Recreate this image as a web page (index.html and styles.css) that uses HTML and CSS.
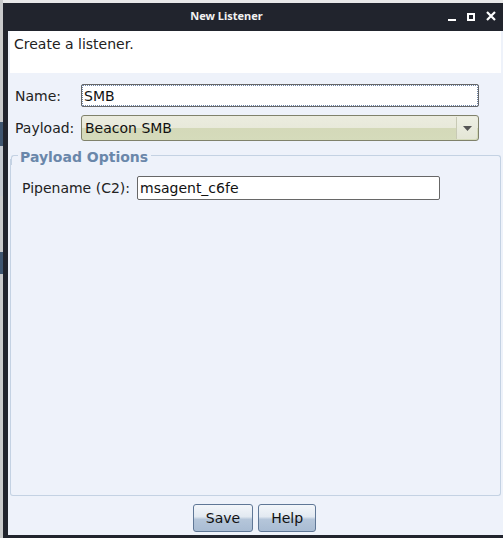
FILE: index.html
```html
<!DOCTYPE html>
<html>
<head>
<meta charset="utf-8">
<link rel="stylesheet" href="styles.css">
</head>
<body>
<div class="desk">
  <div class="behind">
    <div class="chunk c1"></div>
    <div class="chunk c2"></div>
    <div class="chunk c3"></div>
    <div class="chunk c4"></div>
  </div>
  <div class="window">
    <div class="titlebar">
      <span class="title">New Listener</span>
      <div class="controls">
        <span class="min"></span>
        <span class="max"></span>
        <svg class="close" width="10" height="10" viewBox="0 0 10 10"><path d="M1 1L9 9M9 1L1 9" stroke="#fff" stroke-width="2.2"/></svg>
      </div>
    </div>
    <div class="client">
      <div class="header">Create a listener.</div>
      <div class="form">
        <div class="row">
          <label class="lbl">Name:</label>
          <div class="input focused"><span>SMB</span></div>
        </div>
        <div class="row">
          <label class="lbl">Payload:</label>
          <div class="combo"><span>Beacon SMB</span><div class="arrowbtn"><svg width="9" height="5" viewBox="0 0 9 5"><path d="M0 0H9L4.5 5Z" fill="#555"/></svg></div></div>
        </div>
      </div>
      <div class="group">
        <div class="legend">Payload Options</div>
        <div class="grow">
          <label class="lbl2">Pipename (C2):</label>
          <div class="input pipe"><span>msagent_c6fe</span></div>
        </div>
      </div>
      <div class="buttons">
        <button class="btn">Save</button>
        <button class="btn">Help</button>
      </div>
    </div>
  </div>
</div>
</body>
</html>
```
FILE: styles.css
```css
html, body {
  margin: 0;
  padding: 0;
  width: 503px;
  height: 538px;
  overflow: hidden;
  font-family: "DejaVu Sans", sans-serif;
}
.desk {
  display: flex;
  height: 538px;
  background: #e8e8e8;
}
.behind {
  width: 3px;
  background: #c9cacb;
  display: flex;
  flex-direction: column;
  padding-top: 122px;
}
.chunk { width: 3px; }
.c1 { height: 24px; background: #3f5670; }
.c2 { height: 50px; background: #c3c8cf; }
.c3 { height: 56px; background: #c9cacb; }
.c4 { height: 22px; background: #3f5670; }
.window {
  flex: 1;
  margin-top: 3px;
  background: #21242d;
  display: flex;
  flex-direction: column;
  padding: 0 0 3px 5px;
}
.titlebar {
  height: 28px;
  position: relative;
  display: flex;
  align-items: center;
  justify-content: center;
}
.title {
  color: #f2f2f2;
  font-family: "Noto Sans", sans-serif;
  font-size: 11px;
  font-weight: bold;
  margin-right: 58px;
  margin-bottom: 4px;
}
.controls {
  position: absolute;
  right: 7px;
  top: 8px;
  display: flex;
  align-items: flex-end;
  gap: 11px;
}
.min {
  width: 8px;
  height: 2px;
  background: #fff;
}
.max {
  border: 2px solid #fff;
  box-sizing: content-box;
  width: 4px;
  height: 4px;
}
.close { display: block; }
.client {
  flex: 1;
  background: #eef2fa;
  display: flex;
  flex-direction: column;
}
.header {
  background: #fff;
  margin: 0 2px 0 2px;
  height: 42px;
  box-sizing: border-box;
  padding: 5px 0 0 4px;
  font-size: 14px;
  color: #222;
}
.form {
  padding: 11px 0 0 7px;
  display: flex;
  flex-direction: column;
  gap: 8px;
}
.row {
  display: flex;
  align-items: center;
}
.lbl {
  width: 66px;
  font-size: 14px;
  color: #222;
}
.input {
  background: #fff;
  border: 1px solid #676767;
  border-radius: 2px;
  height: 23px;
  box-sizing: border-box;
  display: flex;
  align-items: center;
  font-size: 14px;
  color: #111;
  padding-left: 2px;
}
.focused {
  width: 398px;
  height: 23px;
  outline: 1px dotted #6f86a8;
  outline-offset: -2px;
  padding-left: 2px;
}
.combo {
  width: 398px;
  height: 26px;
  box-sizing: border-box;
  border: 1px solid #80826b;
  border-radius: 3px;
  background: linear-gradient(#ebecdf 0%, #e8e9da 48%, #d4d9b9 52%, #d5dbbb 100%);
  display: flex;
  align-items: center;
  justify-content: space-between;
  font-size: 14px;
  color: #111;
  padding-left: 3px;
}
.arrowbtn {
  width: 20px;
  height: 22px;
  margin-right: 1px;
  border-left: 1px solid #c8cab5;
  display: flex;
  align-items: center;
  justify-content: center;
  background: linear-gradient(#eef0e4, #e4e6d6);
  border-radius: 0 2px 2px 0;
}
.group {
  margin: 18px 2px 0 2px;
  height: 336px;
  border: 1px solid #c4d2e3;
  border-top: none;
  border-radius: 0 0 3px 3px;
  position: relative;
}
.legend {
  position: absolute;
  top: -10px;
  left: -2px;
  right: -1px;
  display: flex;
  align-items: center;
  font-size: 14px;
  font-weight: bold;
  color: #6a87aa;
}
.legend::before {
  content: "";
  width: 7px;
  height: 10px;
  border-left: 1px solid #c4d2e3;
  border-top: 1px solid #c4d2e3;
  border-radius: 3px 0 0 0;
  align-self: flex-end;
  margin-left: 2px;
  margin-right: 2px;
  box-sizing: border-box;
}
.legend::after {
  content: "";
  flex: 1;
  height: 10px;
  border-top: 1px solid #c4d2e3;
  border-right: 1px solid #c4d2e3;
  border-radius: 0 3px 0 0;
  align-self: flex-end;
  margin-left: 3px;
  box-sizing: border-box;
}
.grow {
  display: flex;
  align-items: center;
  padding: 17px 0 0 11px;
}
.lbl2 {
  font-size: 14px;
  color: #222;
  width: 115px;
}
.pipe {
  width: 303px;
  height: 24px;
}
.buttons {
  display: flex;
  justify-content: center;
  gap: 5px;
  margin-top: 8px;
  padding-right: 2px;
}
.btn {
  font-family: "DejaVu Sans", sans-serif;
  font-size: 14px;
  color: #111;
  height: 28px;
  padding: 0 12px;
  border: 1px solid #5f7796;
  border-radius: 3px;
  background: linear-gradient(#f3f6fa 0%, #e2e9f1 45%, #b5c6da 55%, #a9bcd3 100%);
}
```
